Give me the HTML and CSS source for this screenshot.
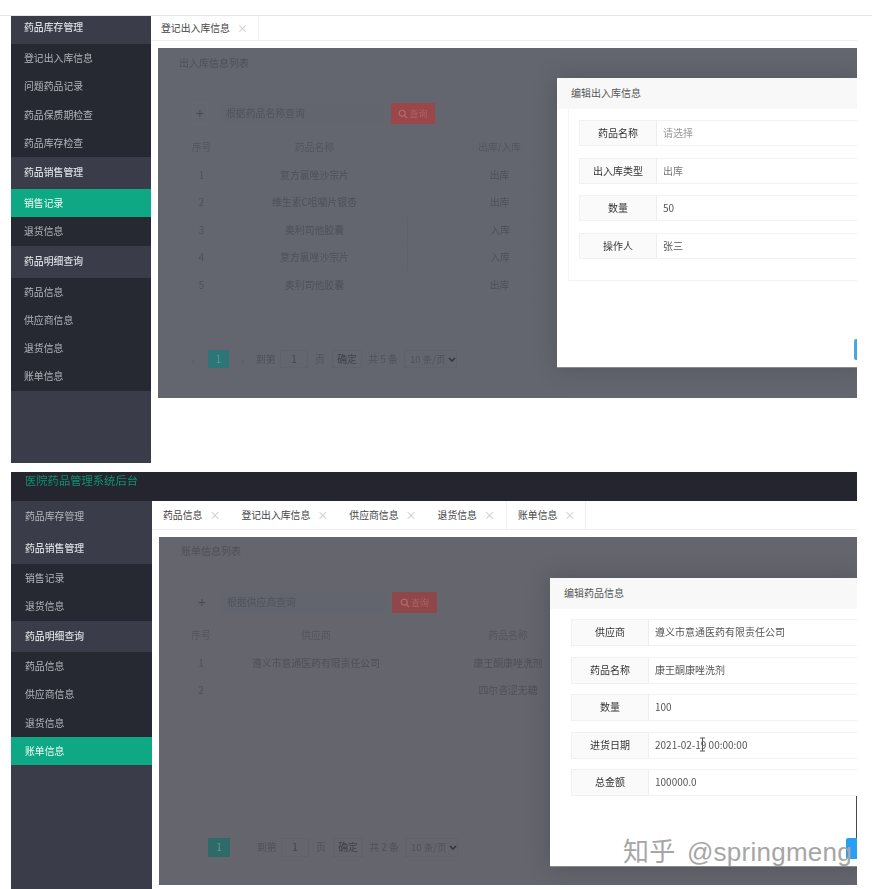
FILE: index.html
```html
<!DOCTYPE html>
<html lang="zh-CN">
<head>
<meta charset="utf-8">
<title>医院药品管理系统后台</title>
<link rel="stylesheet" href="styles.css">
</head>
<body>
<div class="page">
  <section class="shot shot-a">
    <div class="topline"></div>
    <div class="frame frame-a">
      <nav class="side side-a">
        <div class="grp grp-first">药品库存管理</div>
        <div class="itm">登记出入库信息</div>
        <div class="itm">问题药品记录</div>
        <div class="itm">药品保质期检查</div>
        <div class="itm">药品库存检查</div>
        <div class="grp">药品销售管理</div>
        <div class="itm on">销售记录</div>
        <div class="itm">退货信息</div>
        <div class="grp">药品明细查询</div>
        <div class="itm">药品信息</div>
        <div class="itm">供应商信息</div>
        <div class="itm">退货信息</div>
        <div class="itm">账单信息</div>
      </nav>
      <main class="main">
        <div class="tabs">
          <div class="tab tab-lead">登记出入库信息<span class="x">×</span></div>
        </div>
        <div class="shade shade-a">
          <div class="blur">
            <h2 class="ttl">出入库信息列表</h2>
            <div class="bar">
              <span class="plus">+</span>
              <span class="search">根据药品名称查询</span>
              <span class="red"><svg class="mag" viewBox="0 0 12 12"><circle cx="5" cy="5" r="3.6"/><path d="M8 8l3 3"/></svg>查询</span>
            </div>
            <div class="tbl tbl-a">
              <div class="c h">序号</div><div class="c h">药品名称</div><div class="c h">出库/入库</div>
              <div class="c">1</div><div class="c">复方氯唑沙宗片</div><div class="c">出库</div>
              <div class="c">2</div><div class="c">维生素C咀嚼片银杏</div><div class="c">出库</div>
              <div class="c">3</div><div class="c">奥利司他胶囊</div><div class="c lft">入库</div>
              <div class="c">4</div><div class="c">复方氯唑沙宗片</div><div class="c lft">入库</div>
              <div class="c">5</div><div class="c">奥利司他胶囊</div><div class="c">出库</div>
            </div>
            <div class="pager">
              <span class="pv">‹</span><span class="num">1</span><span class="nx">›</span>
              <span class="lb">到第</span><span class="inp">1</span><span class="lb2">页</span>
              <span class="ok">确定</span><span class="tot">共 5 条</span>
              <span class="sel">10 条/页<svg class="chev" viewBox="0 0 8 5"><path d="M1 1l3 3 3-3"/></svg></span>
            </div>
          </div>
          <div class="dlg dlg-a">
            <div class="dlg-h">编辑出入库信息</div>
            <div class="form form-box">
              <div class="row"><div class="lab">药品名称</div><div class="val ph">请选择</div></div>
              <div class="row"><div class="lab">出入库类型</div><div class="val soft">出库</div></div>
              <div class="row"><div class="lab">数量</div><div class="val">50</div></div>
              <div class="row"><div class="lab">操作人</div><div class="val">张三</div></div>
            </div>
            <span class="btn btn-a"></span>
          </div>
        </div>
      </main>
    </div>
  </section>

  <section class="shot shot-b">
    <header class="head"><span class="brand">医院药品管理系统后台</span></header>
    <div class="frame frame-b">
      <nav class="side side-b">
        <div class="grp grp-dim">药品库存管理</div>
        <div class="grp">药品销售管理</div>
        <div class="itm">销售记录</div>
        <div class="itm">退货信息</div>
        <div class="grp">药品明细查询</div>
        <div class="itm">药品信息</div>
        <div class="itm">供应商信息</div>
        <div class="itm">退货信息</div>
        <div class="itm on">账单信息</div>
      </nav>
      <main class="main">
        <div class="tabs">
          <div class="tab tab-b1">药品信息<span class="x">×</span></div>
          <div class="tab">登记出入库信息<span class="x">×</span></div>
          <div class="tab">供应商信息<span class="x">×</span></div>
          <div class="tab">退货信息<span class="x">×</span></div>
          <div class="tab tab-active">账单信息<span class="x">×</span></div>
        </div>
        <div class="shade shade-b">
          <div class="blur">
            <h2 class="ttl">账单信息列表</h2>
            <div class="bar">
              <span class="plus">+</span>
              <span class="search">根据供应商查询</span>
              <span class="red"><svg class="mag" viewBox="0 0 12 12"><circle cx="5" cy="5" r="3.6"/><path d="M8 8l3 3"/></svg>查询</span>
            </div>
            <div class="tbl tbl-b">
              <div class="c h">序号</div><div class="c h">供应商</div><div class="c h">药品名称</div>
              <div class="c">1</div><div class="c">遵义市意通医药有限责任公司</div><div class="c">康王酮康唑洗剂</div>
              <div class="c">2</div><div class="c"></div><div class="c">四尔咨涩无糖</div>
            </div>
            <div class="pager">
              <span class="pv"></span><span class="num">1</span><span class="nx"></span>
              <span class="lb">到第</span><span class="inp">1</span><span class="lb2">页</span>
              <span class="ok">确定</span><span class="tot">共 2 条</span>
              <span class="sel">10 条/页<svg class="chev" viewBox="0 0 8 5"><path d="M1 1l3 3 3-3"/></svg></span>
            </div>
          </div>
          <div class="dlg dlg-b">
            <div class="dlg-h">编辑药品信息</div>
            <div class="form">
              <div class="row"><div class="lab">供应商</div><div class="val">遵义市意通医药有限责任公司</div></div>
              <div class="row"><div class="lab">药品名称</div><div class="val">康王酮康唑洗剂</div></div>
              <div class="row"><div class="lab">数量</div><div class="val">100</div></div>
              <div class="row"><div class="lab">进货日期</div><div class="val">2021-02-19 00:00:00</div></div>
              <div class="row"><div class="lab">总金额</div><div class="val">100000.0</div></div>
            </div>
            <svg class="ibeam" viewBox="0 0 7 15"><path d="M1 1h5M3.5 1v13M1 14h5"/></svg>
            <span class="btn btn-b"></span>
            <span class="sliver"></span>
          </div>
          <div class="mark">知乎 @springmeng</div>
        </div>
      </main>
    </div>
  </section>
</div>
</body>
</html>
```

FILE: styles.css
```css
* { box-sizing: border-box; }
html, body { margin: 0; padding: 0; background: #fff; }
body { font-family: "Noto Sans CJK SC", "Liberation Sans", sans-serif; font-size: 9.85px; color: #444; }
.page { width: 872px; height: 889px; overflow: hidden; display: flex; flex-direction: column; gap: 9px; }

.topline { height: 16px; border-bottom: 1px solid #e6e6e6; }
.frame { margin-left: 11px; width: 846px; display: flex; }
.frame-a { height: 447px; }
.frame-b { height: 388px; }

/* header */
.head { margin-left: 11px; width: 846px; height: 29px; background: #24252e; overflow: hidden; padding-left: 14px; }
.brand { display: block; color: #0f8f73; font-size: 11.3px; line-height: 14px; margin-top: 1px; filter: blur(.3px); }

/* sidebar */
.side { width: 141px; flex: none; background: #3a3d49; }
.side-a { width: 140px; }
.grp, .itm { filter: blur(.25px); }
.grp { height: 32px; line-height: 31px; padding-left: 13px; color: #dcdde0; font-weight: 500; }
.grp-first { height: 28px; line-height: 22px; }
.grp-dim { color: #b5b6bc; font-weight: 400; }
.itm { height: 28.25px; line-height: 28px; padding-left: 13px; background: #272932; color: #b4b5bb; }
.itm.on { background: #0fa884; color: #f2fbf8; }
.side-b .grp, .side-b .itm { padding-left: 14px; }
.side-b .grp { height: 31.5px; }

/* main */
.main { flex: 1; min-width: 0; display: flex; flex-direction: column; }
.tabs { height: 25px; display: flex; border-bottom: 1px solid #efefef; }
.frame-b .tabs { height: 29px; }
.tab { display: flex; align-items: center; padding-left: 23px; color: #444; white-space: nowrap; line-height: 14px; }
.tab-lead { padding-left: 10px; padding-right: 12px; border-right: 1px solid #f0f0f0; }
.tab-b1 { padding-left: 11px; }
.tab-active { padding-left: 11px; padding-right: 12px; margin-left: 13px; border-left: 1px solid #f0f0f0; border-right: 1px solid #f0f0f0; }
.x { margin-left: 7px; width: 9px; color: #c8c8c8; font-size: 11px; text-align: center; }

/* dimmed page */
.shade { position: relative; overflow: hidden; margin-top: 7px; margin-left: 7px; background: #63666e; color: #50535b; }
.shade-a { height: 350px; padding-left: 21px; }
.shade-b { height: 348px; padding-left: 22px; background: #64656d; }
.blur { filter: blur(.6px); }
.ttl { margin: 0; font-size: 10px; font-weight: 400; height: 30px; line-height: 30px; color: #4e5159; }
.shade-b .ttl { height: 28px; line-height: 28px; }
.bar { margin-top: 25px; height: 21px; display: flex; align-items: center; padding-left: 13px; }
.shade-b .bar { margin-top: 27px; padding-left: 11px; }
.plus { width: 16px; height: 21px; border: 1px solid #65686f; line-height: 19px; text-align: center; font-size: 14px; color: #484b53; }
.search { width: 165px; height: 21px; margin-left: 12px; padding-left: 6px; line-height: 21px; color: #50535b; background: #62656d; }
.shade-b .plus { margin-left: 2px; border-color: transparent; }
.shade-b .search { margin-left: 11px; }
.red { width: 44px; height: 21px; margin-left: 6px; background: #9a4749; color: #ad6163; display: flex; align-items: center; justify-content: center; gap: 1px; font-size: 9px; }
.shade-b .red { background: #8f484a; width: 45px; }
.mag { width: 10px; height: 10px; fill: none; stroke: #b86e6e; stroke-width: 1.3; }

.tbl { margin-top: 10px; margin-left: 2px; display: grid; grid-auto-rows: 27.5px; }
.tbl-a { grid-template-columns: 41px 185px 185px; }
.tbl-b { margin-left: 0; margin-top: 9px; grid-template-columns: 40px 190px 194px; }
.c { line-height: 27px; text-align: center; color: #4e5159; border-bottom: 1px solid #62656d; white-space: nowrap; }
.h { color: #53565e; }
.lft { border-left: 1px solid #5f626a; }

.pager { margin-top: 51px; height: 18px; display: flex; align-items: center; color: #4f5259; }
.shade-b .pager { margin-top: 133px; height: 19px; }
.pv { width: 29px; text-align: center; color: #5a5d65; font-size: 12px; }
.shade-b .pv { width: 27px; }
.num { width: 21px; height: 100%; background: #2e7578; color: #5c9a9a; text-align: center; line-height: 18px; }
.shade-b .num { background: #2f6a68; width: 22px; }
.nx { width: 27px; text-align: center; color: #5a5d65; font-size: 12px; }
.lb { width: 24px; }
.inp { width: 28px; height: 100%; border: 1px solid #5f626a; text-align: center; line-height: 16px; color: #43464e; }
.lb2 { width: 24px; text-align: center; }
.ok { width: 30px; height: 100%; border: 1px solid #5f626a; text-align: center; line-height: 16px; color: #3e4149; }
.tot { width: 42px; text-align: center; }
.sel { width: 53px; height: 100%; border: 1px solid #5f626a; padding-left: 5px; line-height: 16px; display: flex; align-items: center; gap: 3px; white-space: nowrap; font-size: 9.5px; }
.chev { width: 8px; height: 5px; fill: none; stroke: #30333a; stroke-width: 1.5; flex: none; }

/* dialog */
.dlg { position: absolute; background: #fff; overflow: hidden; box-shadow: 0 0 22px rgba(40, 42, 50, .28); border-bottom: 1px solid #8a8a8a; color: #444; font-size: 10px; }
.dlg-a { left: 399px; top: 30px; width: 301px; height: 290px; }
.dlg-b { left: 391px; top: 41px; width: 308px; height: 289px; }
.dlg-h { height: 31px; line-height: 30px; padding-left: 14px; background: #f8f8f8; color: #555; }
.form { padding: 10px 0 0 21px; display: flex; flex-direction: column; gap: 10.5px; }
.form-box { margin-left: 11px; padding: 11px 0 0 10px; height: 172px; gap: 11.5px; border-left: 1px solid #f5f5f5; border-bottom: 1px solid #f2f2f2; }
.row { height: 27px; display: flex; border: 1px solid #f1f1f1; border-right: 0; filter: blur(.25px); }
.form-box .row { height: 26px; }
.lab { width: 77px; flex: none; background: #fafafa; border-right: 1px solid #eeeeee; text-align: center; line-height: 24px; color: #333; }
.val { flex: 1; padding-left: 6px; line-height: 24px; color: #555; white-space: nowrap; }
.ph { color: #999; }
.soft { color: #777; }
.btn { position: absolute; background: #4aa8dc; border-radius: 2px 0 0 2px; }
.btn-a { left: 297px; top: 261px; width: 4px; height: 21px; }
.btn-b { left: 296px; top: 260px; width: 12px; height: 21px; background: #2a9df4; }
.sliver { position: absolute; left: 306px; top: 218px; width: 1px; height: 42px; background: #4a4a48; }
.ibeam { position: absolute; left: 149px; top: 159px; width: 7px; height: 15px; fill: none; stroke: #555; stroke-width: 1; }
.mark { position: absolute; left: 464px; top: 299px; font-size: 26px; line-height: 32px; color: #a6a6a6; white-space: nowrap; word-spacing: 4px; letter-spacing: .25px; font-family: "Liberation Sans", "Noto Sans CJK SC", sans-serif; }
```
